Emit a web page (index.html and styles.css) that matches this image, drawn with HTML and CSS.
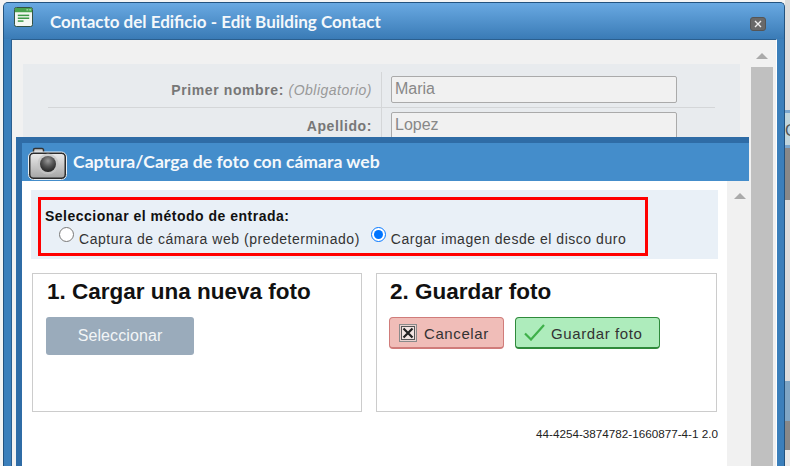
FILE: index.html
```html
<!DOCTYPE html>
<html lang="en">
<head>
    <meta charset="UTF-8">
    <title>Contacto del Edificio</title>
    <link rel="stylesheet" href="styles.css">
</head>
<body>
    <div class="window">
        <div class="titlebar">
            <svg class="title-icon" width="19" height="20" viewBox="0 0 20 21">
                <rect x="0.5" y="0.5" width="19" height="20" rx="2" fill="#f4f7f1" stroke="#2c4a3a"/>
                <rect x="1" y="1" width="18" height="4.5" fill="#4aa34f"/>
                <rect x="13" y="2.5" width="2" height="1" fill="#c9e8c5"/>
                <rect x="16" y="2.5" width="2" height="1" fill="#c9e8c5"/>
                <rect x="4" y="8" width="12" height="1.6" fill="#3f9a4a"/>
                <rect x="4" y="11" width="12" height="1.6" fill="#3f9a4a"/>
                <rect x="4" y="14" width="6" height="1.6" fill="#3f9a4a"/>
            </svg>
            <span class="title-text">Contacto del Edificio - Edit Building Contact</span>
            <span class="close-btn">
                <svg width="8" height="8" viewBox="0 0 8 8"><path d="M1 1l6 6M7 1L1 7" stroke="#eee" stroke-width="1.4"/></svg>
            </span>
        </div>

        <div class="window-body">
            <div class="form-block">
                <div class="form-row">
                    <div class="form-label"><b>Primer nombre:</b> <i>(Obligatorio)</i></div>
                    <div class="form-field"><div class="fake-input">Maria</div></div>
                </div>
                <div class="form-row">
                    <div class="form-label"><b>Apellido:</b></div>
                    <div class="form-field"><div class="fake-input">Lopez</div></div>
                </div>
            </div>
            <div class="outer-scroll">
                <span class="arrow-up"></span>
                <div class="thumb"></div>
            </div>

            <!-- nested photo dialog -->
            <div class="photo-dialog">
                <div class="photo-header">
                    <svg class="camera-icon" width="39" height="33" viewBox="0 0 39 33">
                        <defs>
                            <linearGradient id="camBody" x1="0" y1="0" x2="0" y2="1">
                                <stop offset="0" stop-color="#ececec"/>
                                <stop offset="1" stop-color="#a4a4a4"/>
                            </linearGradient>
                            <radialGradient id="camLens" cx="0.5" cy="0.3" r="0.7">
                                <stop offset="0" stop-color="#999"/>
                                <stop offset="0.5" stop-color="#555"/>
                                <stop offset="1" stop-color="#222"/>
                            </radialGradient>
                        </defs>
                        <path d="M5.500 6V3a1.500 1.500 0 0 1 1.500-1.500h7A1.500 1.500 0 0 1 15.500 3v3" fill="#d0d0d0" stroke="#333" stroke-width="1.500"/>
                        <rect x="1.500" y="6" width="36" height="25.500" rx="4" fill="url(#camBody)" stroke="#2b2b2b" stroke-width="2"/>
                        <rect x="0.500" y="5" width="38" height="27.500" rx="5" fill="none" stroke="#e8eef3" stroke-width="1"/>
                        <circle cx="20" cy="17" r="10.500" fill="#c4c4c4" opacity="0.7"/>
                        <circle cx="20" cy="17" r="8" fill="url(#camLens)"/>
                    </svg>
                    <span class="photo-title">Captura/Carga de foto con cámara web</span>
                </div>
                <div class="photo-main">
                    <div class="photo-content">
                        <div class="method-panel">
                            <div class="method-box">
                                <div class="method-title">Seleccionar el método de entrada:</div>
                                <div class="method-options">
                                    <label class="method-option"><input type="radio" name="metodo">Captura de cámara web (predeterminado)</label>
                                    <label class="method-option"><input type="radio" name="metodo" checked>Cargar imagen desde el disco duro</label>
                                </div>
                            </div>
                        </div>
                        <div class="steps">
                            <div class="step step-load">
                                <h2>1. Cargar una nueva foto</h2>
                                <div class="btn-select">Seleccionar</div>
                            </div>
                            <div class="step step-save">
                                <h2>2. Guardar foto</h2>
                                <div class="step-buttons">
                                    <div class="btn btn-cancel">
                                        <svg width="18" height="18" viewBox="0 0 18 18">
                                            <rect x="0.500" y="0.500" width="17" height="17" fill="#e8d2d0" stroke="#8a8a8a"/>
                                            <rect x="2.500" y="2.500" width="13" height="13" fill="#f1e4e2" stroke="#555"/>
                                            <path d="M4.500 4.500l9 9M13.500 4.500l-9 9" stroke="#222" stroke-width="2.200"/>
                                        </svg>
                                        <span class="btn-text">Cancelar</span>
                                    </div>
                                    <div class="btn btn-save">
                                        <svg width="21" height="17" viewBox="0 0 21 17">
                                            <path d="M1 9.500l6 6L20 1" fill="none" stroke="#3fb04a" stroke-width="2.200"/>
                                        </svg>
                                        <span class="btn-text">Guardar foto</span>
                                    </div>
                                </div>
                            </div>
                        </div>
                        <div class="version">44-4254-3874782-1660877-4-1 2.0</div>
                    </div>
                    <div class="inner-scroll"><span class="arrow-up"></span></div>
                </div>
            </div>
        </div>
    </div>

    <!-- page behind the dialog, only a sliver shows -->
    <div class="behind">
        <div class="behind-a"></div>
        <div class="behind-b">C</div>
        <div class="behind-c"></div>
        <div class="behind-d"></div>
        <div class="behind-e"></div>
        <div class="behind-c behind-f"></div>
        <div class="behind-g"></div>
    </div>
</body>
</html>
```

FILE: styles.css
```css
html, body {
    margin: 0;
    height: 466px;
    overflow: hidden;
}
body {
    display: flex;
    padding-left: 3px;
    box-sizing: border-box;
    background: #f4f4f4;
    font-family: "Liberation Sans", Arial, sans-serif;
}

/* Outer window */
.window {
    width: 782px;
    height: 464px;
    margin-top: 2px;
    box-sizing: border-box;
    display: flex;
    flex-direction: column;
    border: 1px solid #23537f;
    border-bottom: 0;
    border-radius: 5px 5px 0 0;
    background: #3b7fbb;
    padding: 0 7px 0 7px;
    flex: none;
}
.titlebar {
    display: flex;
    align-items: center;
    height: 36px;
    margin: 0 -7px;
    padding: 0 18px 0 10px;
    background: linear-gradient(#69a9e2, #3a7bb6);
    border-radius: 4px 4px 0 0;
    flex: none;
}
.title-icon {
    margin: -8px 0 0 0;
    flex: none;
}
.title-text {
    margin-left: 17px;
    font-family: Lato, sans-serif;
    font-weight: bold;
    font-size: 17px;
    color: #f4f8fb;
    flex: 1;
}
.close-btn {
    display: flex;
    align-items: center;
    justify-content: center;
    width: 16px;
    height: 14px;
    margin-top: 6px;
    background: #696969;
    border: 1px solid #555;
    border-radius: 3px;
    box-sizing: border-box;
}
.window-body {
    position: relative;
    flex: 1;
    display: flex;
    background: #f1f1f1;
    border-top: 1px solid #2b5f8f;
    border-left: 1px solid #2b5f8f;
    border-right: 1px solid #fff;
    padding: 24px 3px 0 11px;
    min-height: 0;
    overflow: hidden;
}

/* Form behind the photo dialog */
.form-block {
    width: 717px;
    height: 100px;
    background: #e8ebee;
    padding: 8px 25px 0 25px;
    box-sizing: border-box;
    flex: none;
}
.form-row {
    display: flex;
    border-bottom: 1px solid #d4d6d8;
    height: 35px;
}
.form-row:last-child {
    border-bottom: 0;
}
.form-label {
    width: 334px;
    padding: 10px 9px 0 0;
    box-sizing: border-box;
    text-align: right;
    border-right: 1px solid #d4d6d8;
    font-size: 14px;
    letter-spacing: 0.6px;
    color: #777;
}
.form-label i {
    color: #999;
    letter-spacing: 0.5px;
}
.form-field {
    padding: 4px 0 0 9px;
}
.fake-input {
    width: 286px;
    height: 27px;
    box-sizing: border-box;
    padding: 3px 3px;
    background: #f1f1f1;
    border: 1px solid #aaa;
    border-radius: 2px;
    font-size: 16px;
    color: #888;
}
.outer-scroll {
    width: 22px;
    margin-left: 11px;
    margin-top: -12px;
    display: flex;
    flex-direction: column;
    align-items: center;
    flex: none;
}
.arrow-up {
    width: 0;
    height: 0;
    border-left: 6px solid transparent;
    border-right: 6px solid transparent;
    border-bottom: 6px solid #aaa;
}
.outer-scroll .arrow-up {
    margin-top: 1px;
}
.thumb {
    width: 22px;
    flex: 1;
    margin-top: 8px;
    background: #c0c0c0;
}

/* Photo dialog, on top of the form */
.photo-dialog {
    position: absolute;
    left: 4px;
    top: 97px;
    width: 733px;
    bottom: 0;
    display: flex;
    flex-direction: column;
    box-sizing: border-box;
    border-top: 6px solid #2f6ca6;
    border-left: 6px solid #2f6ca6;
    background: #fff;
}
.photo-header {
    height: 38px;
    display: flex;
    align-items: center;
    padding-left: 6px;
    background: #448dcb;
    flex: none;
}
.camera-icon {
    flex: none;
    margin-top: 2px;
}
.photo-title {
    margin-left: 6px;
    margin-top: -2px;
    font-family: Lato, sans-serif;
    font-weight: bold;
    font-size: 17.6px;
    color: #f4f8fb;
}
.photo-main {
    flex: 1;
    display: flex;
    min-height: 0;
}
.photo-content {
    width: 705px;
    padding: 9px 0 0 9px;
    box-sizing: border-box;
    flex: none;
}
.inner-scroll {
    flex: 1;
    background: #f1f1f1;
    display: flex;
    flex-direction: column;
    align-items: center;
    padding: 12px 0 0 4px;
}
.method-panel {
    width: 687px;
    height: 69px;
    padding: 7px 0 0 7px;
    box-sizing: border-box;
    background: #e9f0f7;
}
.method-box {
    width: 610px;
    height: 59px;
    box-sizing: border-box;
    border: 3px solid #f00;
    padding: 8px 0 0 4px;
}
.method-title {
    font-size: 14px;
    font-weight: bold;
    letter-spacing: 0.5px;
    color: #111;
    line-height: 16px;
}
.method-options {
    display: flex;
    gap: 11px;
    padding-left: 14px;
    margin-top: 7px;
}
.method-option {
    display: flex;
    align-items: center;
    font-size: 14px;
    letter-spacing: 0.53px;
    color: #333;
    white-space: nowrap;
}
.method-option input {
    width: 15px;
    height: 15px;
    margin: -9px 5px 0 0;
    accent-color: #0075ff;
}
.steps {
    display: flex;
    gap: 14px;
    margin: 14px 0 0 1px;
}
.step {
    height: 139px;
    box-sizing: border-box;
    border: 1px solid #ccc;
    padding: 5px 13px;
}
.step-load {
    width: 330px;
}
.step-save {
    width: 341px;
    padding-left: 12px;
}
.step h2 {
    margin: 0 0 13px 1px;
    font-size: 22.5px;
    line-height: 25px;
    font-weight: bold;
    color: #111;
}
.btn-select {
    width: 148px;
    height: 38px;
    line-height: 38px;
    text-align: center;
    background: #9aabbb;
    border-radius: 3px;
    font-size: 16px;
    letter-spacing: 0.1px;
    color: #f2f5f7;
}
.step-buttons {
    display: flex;
    gap: 11px;
}
.btn {
    display: flex;
    align-items: center;
    height: 32px;
    box-sizing: border-box;
    border-radius: 4px;
    font-size: 15px;
    letter-spacing: 0.6px;
    color: #333;
}
.btn-text {
    margin-top: 2px;
}
.btn-cancel {
    width: 115px;
    gap: 7px;
    padding-left: 9px;
    background: #f0bdb8;
    border: 1px solid #d07c7a;
    border-bottom-width: 2px;
}
.btn-save {
    width: 145px;
    gap: 6px;
    padding-left: 8px;
    background: #aeecbc;
    border: 1px solid #2f8a3b;
    border-bottom-width: 2px;
}
.version {
    margin-top: 15px;
    width: 687px;
    text-align: right;
    font-size: 11.7px;
    line-height: 14px;
    color: #222;
}

/* Sliver of the page behind */
.behind {
    flex: 1;
    display: flex;
    flex-direction: column;
    overflow: hidden;
    background: #dcdcdc;
}
.behind div {
    flex: none;
}
.behind-a {
    height: 107px;
    margin-top: 3px;
    background: #dcdcdc;
    border-bottom: 3px solid #7ba7cf;
}
.behind-b {
    height: 32px;
    background: #c1d6dd;
    border-bottom: 3px solid #7ba7cf;
    font-size: 16px;
    line-height: 36px;
    color: #555;
}
.behind-c {
    height: 52px;
    background: #888;
}
.behind-d {
    height: 181px;
    background: #dcdcdc;
}
.behind-e {
    height: 40px;
    background: #7fa5c4;
}
.behind-f {
    height: 29px;
}
.behind-g {
    height: 16px;
    background: #e8e8e8;
}
```
